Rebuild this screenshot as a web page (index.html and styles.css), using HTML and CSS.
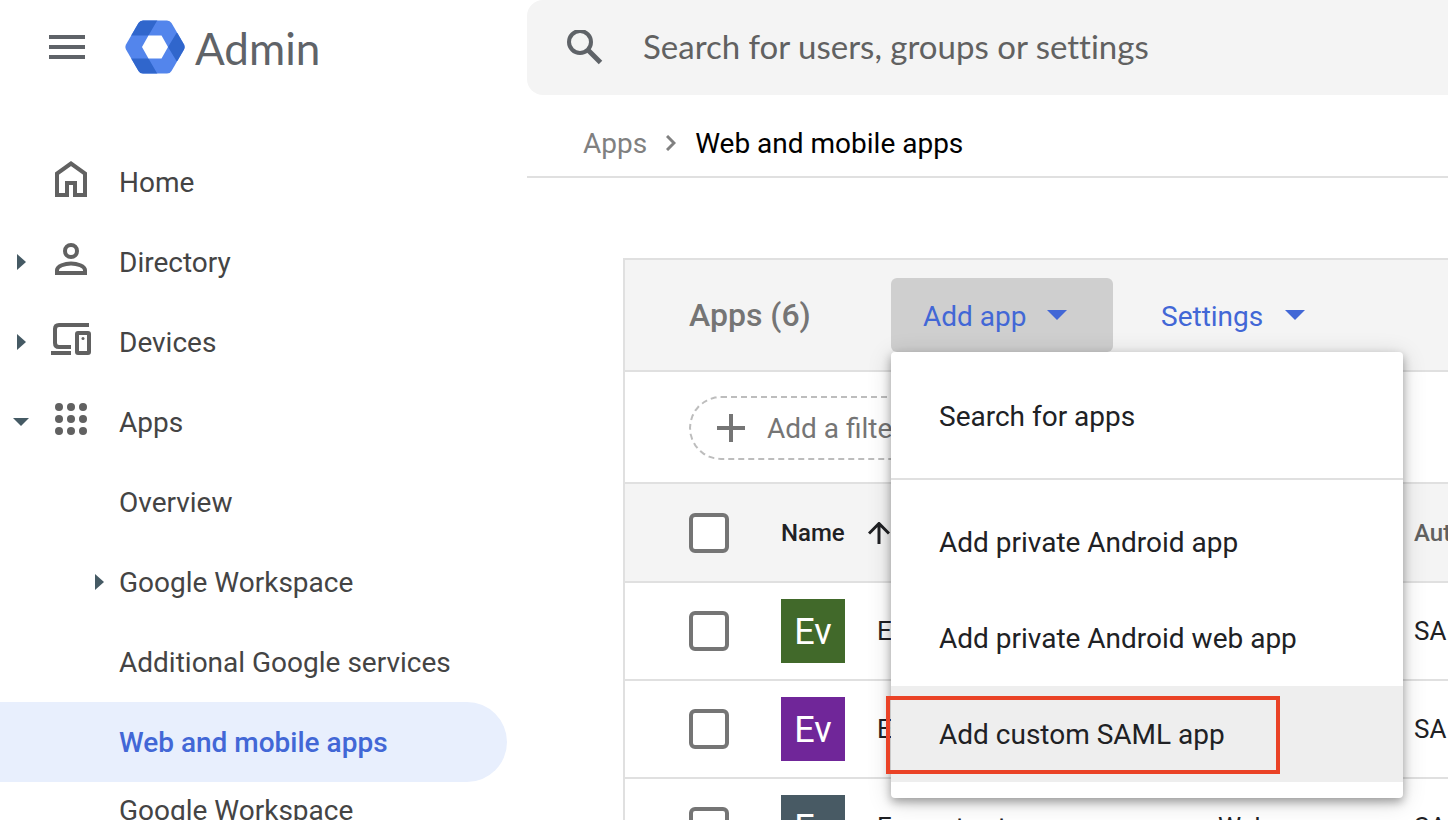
FILE: index.html
```html
<!DOCTYPE html>
<html lang="en">
<head>
<meta charset="utf-8">
<title>Admin - Web and mobile apps</title>
<link rel="stylesheet" href="styles.css">
</head>
<body>
<div class="page">
  <aside class="sidebar">
    <header class="brand">
      <button class="icon-button" aria-label="Main menu">
        <svg width="36" height="24" viewBox="0 0 36 24" fill="#5f6368"><path d="M0 0h36v4H0zM0 10h36v4H0zM0 20h36v4H0z"/></svg>
      </button>
      <a class="logo" href="#">
        <svg width="60" height="54" viewBox="0 0 60 54">
          <defs><clipPath id="hex"><path d="M18 .5h24q3 0 4.500 2.500l12.500 21.500q1.200 2.500 0 5l-12.500 21.500q-1.500 2.500-4.500 2.500h-24q-3 0-4.500-2.500l-12.500-21.500q-1.200-2.500 0-5l12.500-21.500q1.500-2.500 4.500-2.500z"/></clipPath></defs>
          <g clip-path="url(#hex)">
            <path fill="#5385ec" d="M0 0h60v54H0z"/>
            <path fill="#3066cc" d="M0 0h32.500L23.500 15.500H0zM51.500 13l8.500 0v28h-8.500l-8.500-14zM0 38.500h23.500L32.500 54H0z"/>
          </g>
          <path fill="#fff" d="M23.500 15.500h13l6.500 11.500-6.500 11.500h-13L17 27z"/>
        </svg>
        <span class="logo-text">Admin</span>
      </a>
    </header>
    <nav class="nav" aria-label="Main">
      <a class="nav-item" href="#">
        <span class="nav-arrow"></span>
        <svg class="nav-icon" viewBox="0 0 40 40" fill="none" stroke="#616161" stroke-width="4"><path d="M6 33V11.500L20 1.500l14 10V33H24V21h-8v12z"/></svg>
        <span class="label">Home</span>
      </a>
      <a class="nav-item" href="#">
        <span class="nav-arrow"><svg width="9" height="16" viewBox="0 0 9 16"><path fill="#455a64" d="M0 0l9 8-9 8z"/></svg></span>
        <svg class="nav-icon" viewBox="0 0 40 40" fill="none" stroke="#616161" stroke-width="4"><circle cx="20" cy="9" r="6"/><path d="M6 31v-3c0-4 8-6.500 14-6.500S34 24 34 28v3z"/></svg>
        <span class="label">Directory</span>
      </a>
      <a class="nav-item" href="#">
        <span class="nav-arrow"><svg width="9" height="16" viewBox="0 0 9 16"><path fill="#455a64" d="M0 0l9 8-9 8z"/></svg></span>
        <svg class="nav-icon" viewBox="0 0 40 40" fill="none" stroke="#616161" stroke-width="4"><path d="M38 3H8q-4 0-4 4v14q0 4 4 4h12M0 31h20"/><rect x="26" y="11" width="12" height="20" rx="1"/><circle cx="32" cy="16.500" r="1.500" fill="#616161" stroke="none"/></svg>
        <span class="label">Devices</span>
      </a>
      <a class="nav-item" href="#">
        <span class="nav-arrow"><svg width="16" height="8" viewBox="0 0 16 8"><path fill="#455a64" d="M0 0h16L8 8z"/></svg></span>
        <svg class="nav-icon" viewBox="0 0 40 40" fill="#616161"><circle cx="8" cy="5" r="4"/><circle cx="20" cy="5" r="4"/><circle cx="32" cy="5" r="4"/><circle cx="8" cy="17" r="4"/><circle cx="20" cy="17" r="4"/><circle cx="32" cy="17" r="4"/><circle cx="8" cy="29" r="4"/><circle cx="20" cy="29" r="4"/><circle cx="32" cy="29" r="4"/></svg>
        <span class="label">Apps</span>
      </a>
      <a class="nav-item nav-sub" href="#"><span class="nav-arrow"></span><span class="label">Overview</span></a>
      <a class="nav-item nav-sub" href="#"><span class="nav-arrow"><svg width="9" height="16" viewBox="0 0 9 16"><path fill="#455a64" d="M0 0l9 8-9 8z"/></svg></span><span class="label">Google Workspace</span></a>
      <a class="nav-item nav-sub" href="#"><span class="nav-arrow"></span><span class="label">Additional Google services</span></a>
      <a class="nav-item nav-sub nav-active" href="#" aria-current="page"><span class="nav-arrow"></span><span class="label">Web and mobile apps</span></a>
      <a class="nav-item nav-sub nav-wrap" href="#"><span class="nav-arrow"></span><span class="label">Google Workspace</span></a>
    </nav>
  </aside>

  <main class="main">
    <form class="search">
      <svg width="36" height="36" viewBox="0 0 36 36" fill="none" stroke="#5f6368" stroke-width="4"><circle cx="13" cy="12" r="11"/><path d="M20.500 19.500l13 13" stroke-width="5"/></svg>
      <input class="search-input" type="text" aria-label="Search" placeholder="Search for users, groups or settings">
    </form>
    <nav class="crumbs" aria-label="Breadcrumb">
      <a class="crumb-link label" href="#">Apps</a>
      <svg width="10" height="16" viewBox="0 0 10 16" fill="none" stroke="#808080" stroke-width="3"><path d="M1 1l7 7-7 7"/></svg>
      <span class="label">Web and mobile apps</span>
    </nav>

    <section class="card">
      <div class="toolbar">
        <h1 class="title">Apps (6)</h1>
        <div class="menu-anchor">
          <button class="action action-open" aria-haspopup="menu" aria-expanded="true">
            <span class="action-label">Add app</span>
            <svg width="20" height="10" viewBox="0 0 20 10"><path fill="#4267d6" d="M0 0h20L10 10z"/></svg>
          </button>
          <div class="menu" role="menu">
            <button class="menu-item" role="menuitem">Search for apps</button>
            <hr class="menu-line">
            <button class="menu-item" role="menuitem">Add private Android app</button>
            <button class="menu-item" role="menuitem">Add private Android web app</button>
            <button class="menu-item menu-hover" role="menuitem">Add custom SAML app</button>
          </div>
        </div>
        <button class="action" aria-haspopup="menu">
          <span class="action-label">Settings</span>
          <svg width="20" height="10" viewBox="0 0 20 10"><path fill="#4267d6" d="M0 0h20L10 10z"/></svg>
        </button>
      </div>
      <div class="filters">
        <button class="filter">
          <svg width="28" height="28" viewBox="0 0 28 28" fill="#757575"><path d="M12 0h4v12h12v4H16v12h-4V16H0v-4h12z"/></svg>
          <span class="label">Add a filter</span>
        </button>
      </div>
      <table class="apps">
        <colgroup><col class="col-check"><col class="col-name"><col class="col-platform"><col></colgroup>
        <thead>
          <tr>
            <th class="check-cell"><input class="check" type="checkbox" aria-label="Select all apps"></th>
            <th><div class="sort">Name
              <svg width="22" height="22" viewBox="0 0 22 22" fill="none" stroke="#202124" stroke-width="3"><path d="M11 22V2M1 11.500l10-10 10 10"/></svg></div></th>
            <th></th>
            <th class="auth-head">Authentication</th>
          </tr>
        </thead>
        <tbody>
          <tr>
            <td class="check-cell"><input class="check" type="checkbox" aria-label="Select first app"></td>
            <td><div class="app"><span class="tile tile-green">Ev</span>E</div></td>
            <td></td>
            <td>SAML</td>
          </tr>
          <tr>
            <td class="check-cell"><input class="check" type="checkbox" aria-label="Select second app"></td>
            <td><div class="app"><span class="tile tile-purple">Ev</span>E</div></td>
            <td></td>
            <td>SAML</td>
          </tr>
          <tr>
            <td class="check-cell"><input class="check" type="checkbox" aria-label="Select third app"></td>
            <td><div class="app"><span class="tile tile-slate">Ev</span>Evernote stage</div></td>
            <td>Web</td>
            <td>SAML</td>
          </tr>
        </tbody>
      </table>
    </section>
  </main>
  <div class="highlight"></div>
</div>
</body>
</html>
```

FILE: styles.css
```css
* {
  box-sizing: border-box;
}

body {
  margin: 0;
  font-family: Roboto, "Liberation Sans", sans-serif;
  font-size: 28px;
  line-height: 40px;
  color: #202124;
  background: #fff;
}

button,
input {
  font: inherit;
  color: inherit;
}

button {
  border: 0;
  padding: 0;
  background: none;
  text-align: left;
  cursor: pointer;
}

a {
  color: inherit;
  text-decoration: none;
}

svg {
  display: block;
  flex: none;
}

.label {
  padding-top: 2px;
}

.page {
  position: relative;
  display: flex;
  height: 100vh;
  overflow: hidden;
}

.sidebar {
  flex: none;
  width: 527px;
  padding-right: 20px;
}

.brand {
  display: flex;
  align-items: center;
  gap: 40px;
  height: 94px;
  padding-left: 49px;
}

.logo {
  display: flex;
  align-items: center;
  gap: 10px;
}

.logo-text {
  padding-top: 2px;
  font-family: Lato, Roboto, sans-serif;
  font-size: 44px;
  line-height: 48px;
  color: #5f6368;
}

.nav {
  padding-top: 48px;
  color: #444;
}

.nav-item {
  display: flex;
  align-items: center;
  height: 80px;
  white-space: nowrap;
}

.nav-arrow {
  display: flex;
  justify-content: center;
  width: 42px;
}

.nav-icon {
  width: 40px;
  height: 40px;
  margin: 0 28px 0 9px;
  overflow: visible;
}

.nav-sub .nav-arrow {
  width: 119px;
  padding-left: 79px;
}

.nav-active {
  border-radius: 0 40px 40px 0;
  background: #e8effd;
  color: #4267d6;
  font-weight: 500;
}

.nav-wrap {
  height: 56px;
}

.main {
  flex: 1;
  min-width: 0;
}

.search {
  display: flex;
  align-items: center;
  gap: 40px;
  height: 95px;
  padding-left: 40px;
  border-radius: 16px 0 0 16px;
  background: #f4f4f4;
}

.search-input {
  flex: 1;
  min-width: 0;
  padding: 0 0 4px;
  border: 0;
  outline: 0;
  background: none;
  font-family: Lato, Roboto, sans-serif;
  font-size: 33px;
  font-variant-ligatures: none;
}

.search-input::placeholder {
  color: #616161;
  opacity: 1;
}

.crumbs {
  display: flex;
  align-items: center;
  gap: 19px;
  height: 83px;
  padding: 14px 0 0 56px;
  border-bottom: 2px solid #e0e0e0;
  color: #000;
}

.crumb-link {
  color: #808080;
}

.card {
  margin: 80px 0 0 96px;
  border: 2px solid #e0e0e0;
  border-right: 0;
}

.toolbar {
  display: flex;
  align-items: flex-start;
  height: 112px;
  padding: 18px 0 0 64px;
  border-bottom: 2px solid #e0e0e0;
  background: #f4f4f4;
}

.title {
  width: 202px;
  margin: 0;
  font-size: 32px;
  font-weight: 500;
  line-height: 74px;
  color: #757575;
}

.menu-anchor {
  position: relative;
  margin-right: 16px;
}

.action {
  display: flex;
  align-items: center;
  justify-content: space-between;
  width: 222px;
  height: 74px;
  padding: 0 46px 0 32px;
  border-radius: 6px;
  color: #4267d6;
}

.action-label {
  padding-top: 4px;
}

.action-open {
  background: #cfcfcf;
}

.menu {
  position: absolute;
  z-index: 2;
  top: 100%;
  left: 0;
  width: 512px;
  padding: 16px 0;
  border-radius: 4px;
  background: #fff;
  box-shadow: 0 4px 10px rgba(0, 0, 0, 0.32), 0 4px 24px rgba(0, 0, 0, 0.16);
}

.menu-item {
  display: block;
  width: 100%;
  height: 96px;
  padding: 2px 48px 0;
}

.menu-line {
  height: 2px;
  margin: 14px 0;
  border: 0;
  background: #e0e0e0;
}

.menu-hover {
  background: #eee;
}

.filters {
  height: 112px;
  padding: 24px 64px;
  border-bottom: 2px solid #e0e0e0;
}

.filter {
  display: flex;
  align-items: center;
  gap: 22px;
  height: 64px;
  padding: 0 32px 0 26px;
  border: 2px dashed #bdbdbd;
  border-radius: 32px;
  color: #757575;
}

.apps {
  width: 100%;
  table-layout: fixed;
  border-collapse: collapse;
  font-size: 26px;
  white-space: nowrap;
}

.col-check {
  width: 156px;
}

.col-name {
  width: 437px;
}

.col-platform {
  width: 196px;
}

.apps th,
.apps td {
  height: 98px;
  padding: 0;
  border-bottom: 2px solid #e0e0e0;
  text-align: left;
}

.apps th {
  background: #f4f4f4;
  font-size: 24px;
  font-weight: 500;
}

.apps .check-cell {
  padding-left: 64px;
}

.apps .auth-head {
  color: #616161;
}

.check {
  display: block;
  appearance: none;
  width: 40px;
  height: 40px;
  margin: 0;
  border: 4px solid #757575;
  border-radius: 6px;
  background: #fff;
}

.sort {
  display: flex;
  align-items: center;
  gap: 23px;
}

.app {
  display: flex;
  align-items: center;
  gap: 32px;
}

.tile {
  width: 64px;
  height: 64px;
  color: #fff;
  font-size: 36px;
  line-height: 66px;
  text-align: center;
}

.tile-green {
  background: #41692a;
}

.tile-purple {
  background: #702699;
}

.tile-slate {
  background: #485a64;
}

.highlight {
  position: absolute;
  z-index: 3;
  top: 696px;
  left: 886px;
  width: 394px;
  height: 78px;
  border: 4px solid #ea4226;
  pointer-events: none;
}
```
